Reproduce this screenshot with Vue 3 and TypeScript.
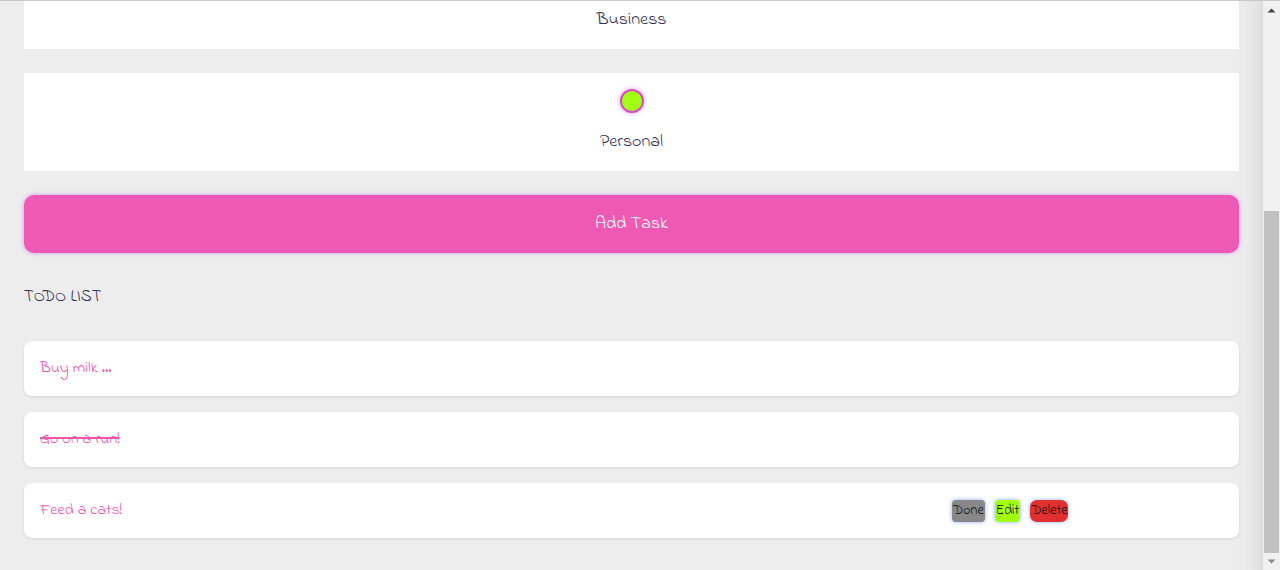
<script setup lang="ts">
import { ref } from 'vue'

interface Todo {
  id: number
  content: string
  done: boolean
  actions: boolean
}

const category = ref('personal')
const todos = ref<Todo[]>([
  { id: 1, content: 'Buy milk ...', done: false, actions: false },
  { id: 2, content: 'Go on a run!', done: true, actions: false },
  { id: 3, content: 'Feed a cats!', done: false, actions: true },
])

function toggle(todo: Todo) {
  todo.done = !todo.done
}

function remove(id: number) {
  todos.value = todos.value.filter((t) => t.id !== id)
}
</script>

<template>
  <div class="window">
    <main class="page">
      <form class="form" @submit.prevent>
        <label class="option option-cut">
          <input v-model="category" class="hidden" type="radio" name="category" value="business" />
          <span>Business</span>
        </label>
        <label class="option">
          <input v-model="category" class="bubble" type="radio" name="category" value="personal" />
          <span>Personal</span>
        </label>
        <button class="add" type="submit">Add Task</button>
      </form>

      <h3 class="title">TODO LIST</h3>

      <ul class="list">
        <li v-for="todo in todos" :key="todo.id" class="item">
          <span class="content" :class="{ done: todo.done }">{{ todo.content }}</span>
          <div v-if="todo.actions" class="actions">
            <button class="act act-done" type="button" @click="toggle(todo)">Done</button>
            <button class="act act-edit" type="button">Edit</button>
            <button class="act act-delete" type="button" @click="remove(todo.id)">Delete</button>
          </div>
        </li>
      </ul>
    </main>

    <div class="scrollbar" aria-hidden="true">
      <svg class="arrow" viewBox="0 0 17 17"><path d="M4.5 11.5 8.5 7.5 12.5 11.5Z" fill="#444" /></svg>
      <div class="track">
        <div class="thumb"></div>
      </div>
      <svg class="arrow" viewBox="0 0 17 17"><path d="M4.5 6.5 8.5 10.5 12.5 6.5Z" fill="#8a8a8a" /></svg>
    </div>
  </div>
</template>

<style>
body {
  margin: 0;
  background: #ededed;
}
</style>

<style scoped>
* {
  box-sizing: border-box;
}

.window {
  display: flex;
  min-height: 100vh;
  border-top: 1px solid #c8c8c8;
  color: #313154;
  font-family: "Indie Flower", Lato, "Open Sans", sans-serif;
  font-weight: 300;
}

button {
  font: inherit;
  border: 0;
  cursor: pointer;
}

.page {
  flex: 1;
  min-width: 0;
  padding: 0 24px;
  background: linear-gradient(to left, #dcdcdc, #e5e5e5 8px, #ebebeb 18px, #ededed 28px);
}

.form {
  display: flex;
  flex-direction: column;
  gap: 24px;
}

.option {
  position: relative;
  display: flex;
  flex-direction: column;
  align-items: center;
  gap: 16px;
  padding: 16px;
  background: #fff;
  font-size: 18px;
  line-height: 26px;
  cursor: pointer;
}

.option-cut {
  padding-top: 6px;
}

.hidden {
  position: absolute;
  opacity: 0;
  pointer-events: none;
}

.bubble {
  appearance: none;
  width: 24px;
  height: 24px;
  margin: 0;
  border: 2px solid #d64fc0;
  border-radius: 50%;
  background: #a3ff12;
  box-shadow: 0 0 5px rgba(190, 80, 230, 0.6);
}

.add {
  padding: 16px;
  border-radius: 10px;
  background: #ee59b3;
  box-shadow: 0 0 4px rgba(190, 90, 240, 0.6);
  color: #fff;
  font-size: 18px;
  font-weight: 400;
  line-height: 26px;
}

.title {
  margin: 32px 0;
  font-size: 17px;
  font-weight: 300;
  line-height: 24px;
}

.list {
  display: flex;
  flex-direction: column;
  gap: 16px;
  margin: 0;
  padding: 0 0 31px;
  list-style: none;
}

.item {
  display: grid;
  grid-template-columns: minmax(0, 1fr) 271px;
  align-items: center;
  padding: 16px;
  border-radius: 8px;
  background: #fff;
  box-shadow: 0 1px 3px rgba(0, 0, 0, 0.1);
}

.content {
  color: #ee55b0;
  font-size: 16px;
  line-height: 23px;
}

.done {
  justify-self: start;
  text-decoration: line-through;
  text-decoration-thickness: 2px;
}

.actions {
  display: flex;
  gap: 10px;
}

.act {
  padding: 0 1px;
  border-radius: 4px;
  box-shadow: 0 0 4px rgba(60, 120, 240, 0.6);
  color: #111;
  font-size: 14px;
  font-weight: 400;
  line-height: 22px;
}

.act-done {
  background: #888;
}

.act-edit {
  background: #a3ff12;
}

.act-delete {
  border-radius: 7px;
  background: #e03030;
}

.scrollbar {
  display: flex;
  flex-direction: column;
  flex: 0 0 17px;
  background: #f1f1f1;
}

.arrow {
  display: block;
  width: 17px;
  height: 17px;
}

.track {
  display: flex;
  flex: 1;
  flex-direction: column;
  justify-content: flex-end;
  padding: 0 1px;
}

.thumb {
  height: 64%;
  background: #c1c1c1;
}
</style>
